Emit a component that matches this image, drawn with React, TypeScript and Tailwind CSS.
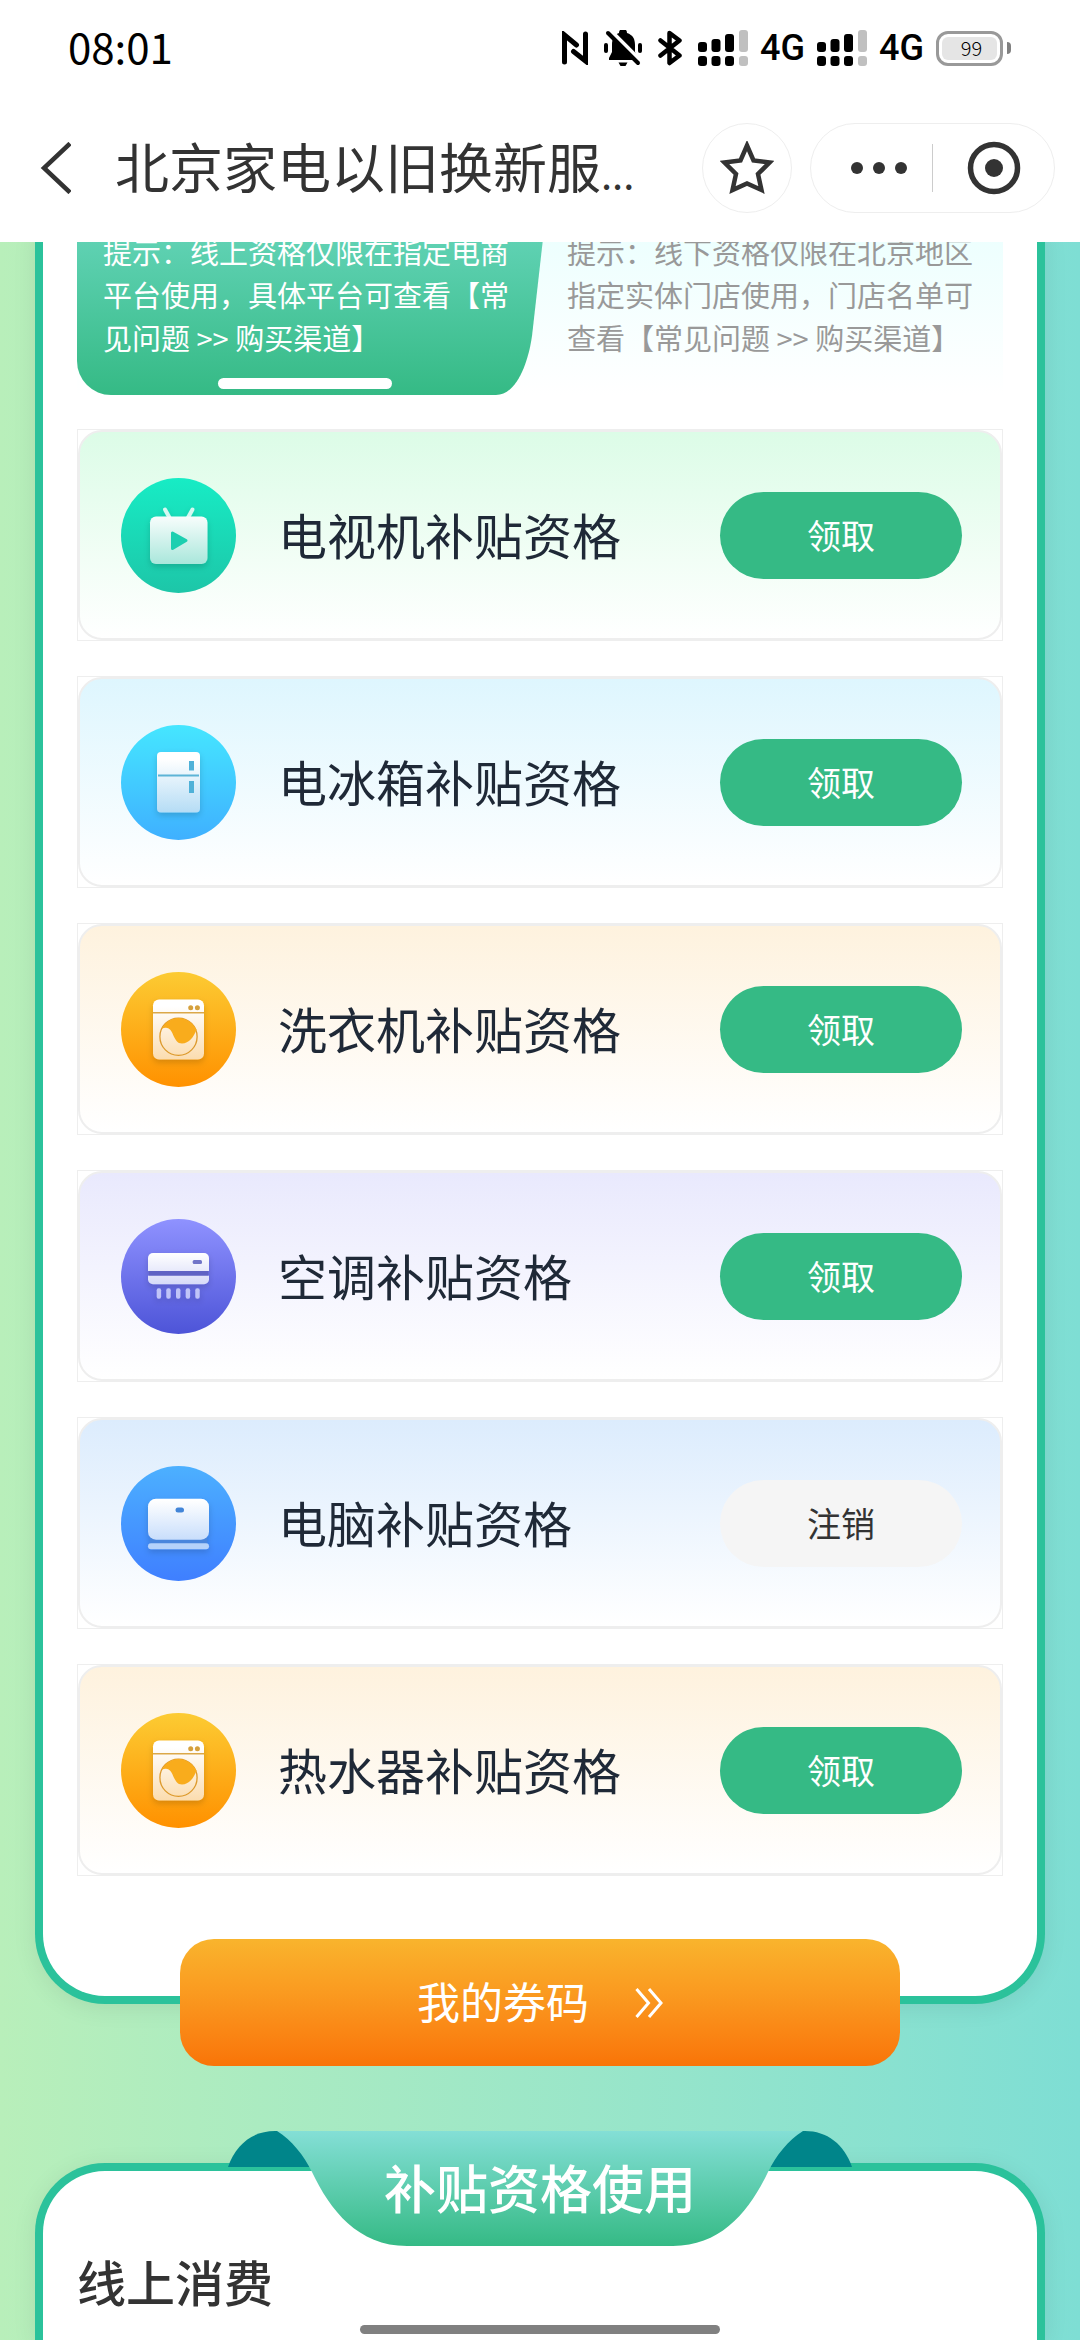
import type { ReactNode } from "react";

type Appliance = {
  name: string;
  card: string;
  icon: ReactNode;
  claimed?: boolean;
};

type BadgeProps = {
  id: string;
  from: string;
  to: string;
  plateTo: string;
  children: ReactNode;
};

/* Round gradient badge, the drawing inside uses url(#<id>-plate) as its fill */
function Badge({ id, from, to, plateTo, children }: BadgeProps) {
  return (
    <svg className="size-[115px] shrink-0" viewBox="0 0 115 115" aria-hidden="true">
      <defs>
        <linearGradient id={`${id}-bg`} x1="0" y1="0" x2="0" y2="1">
          <stop offset="0" stopColor={from} />
          <stop offset="1" stopColor={to} />
        </linearGradient>
        <linearGradient id={`${id}-plate`} gradientUnits="userSpaceOnUse" x1="0" y1="34" x2="0" y2="88">
          <stop offset="0" stopColor="#ffffff" />
          <stop offset="1" stopColor={plateTo} />
        </linearGradient>
        <filter id={`${id}-shadow`} x="-30%" y="-30%" width="160%" height="160%">
          <feDropShadow dx="0" dy="3" stdDeviation="3" floodColor="#000000" floodOpacity="0.16" />
        </filter>
      </defs>
      <circle cx="57.5" cy="57.5" r="57.5" fill={`url(#${id}-bg)`} />
      <g filter={`url(#${id}-shadow)`}>{children}</g>
    </svg>
  );
}

function TvIcon() {
  return (
    <Badge id="tv" from="#17ecc5" to="#1dc6a8" plateTo="#a6e6da">
      <path d="M44 31.5l5 9M71.5 31.5l-5 9" stroke="#d6f8f1" strokeWidth="4" strokeLinecap="round" />
      <rect x="29" y="38.5" width="57.5" height="47.5" rx="6" fill="url(#tv-plate)" />
      <path d="M51.5 55v15.5L65 62.5z" fill="#1fcfb0" stroke="#1fcfb0" strokeWidth="3" strokeLinejoin="round" />
    </Badge>
  );
}

function FridgeIcon() {
  return (
    <Badge id="fridge" from="#45e6ff" to="#3fb0ff" plateTo="#b4dcf5">
      <rect x="36" y="27" width="43" height="60.5" rx="4" fill="url(#fridge-plate)" />
      <path d="M37 50.5h41" stroke="#5db4d6" strokeWidth="2" />
      <rect x="68" y="36" width="5" height="9.5" fill="#4fb1d8" />
      <rect x="68" y="56" width="5" height="12" fill="#4fb1d8" />
    </Badge>
  );
}

function WasherIcon({ id }: { id: string }) {
  return (
    <Badge id={id} from="#fccb33" to="#ff9100" plateTo="#fbdcae">
      <rect x="32" y="27.5" width="51" height="60" rx="6" fill={`url(#${id}-plate)`} />
      <path d="M32 40.7h51" stroke="#dba848" strokeWidth="1.5" />
      <circle cx="69.7" cy="35.7" r="2.5" fill="#d5a03c" />
      <circle cx="76.4" cy="35.7" r="2.5" fill="#d5a03c" />
      <circle cx="57.5" cy="64.7" r="18.6" fill="none" stroke="#dd9a2c" strokeWidth="1.3" />
      <path
        d="M41 57C44 50 50 46 57.5 46S71 50 75.5 57.5C73 65 68 71.5 61 71.5C52 71.5 53 57 46 56C44 55.5 42.5 56 41 57Z"
        fill="#f9ac1e"
      />
    </Badge>
  );
}

function AirConIcon() {
  return (
    <Badge id="aircon" from="#8f92ff" to="#4d54d8" plateTo="#b9bff3">
      <rect x="28" y="51" width="59" height="7" fill="#6163c4" />
      <path d="M27 52V39a5 5 0 0 1 5-5h51a5 5 0 0 1 5 5v13z" fill="url(#aircon-plate)" />
      <path d="M27 56.7h61v3.5a5 5 0 0 1-5 5H32a5 5 0 0 1-5-5z" fill="url(#aircon-plate)" />
      <rect x="71.7" y="41" width="9.3" height="4" rx="1.5" fill="#7174c8" />
      {[35.7, 45.3, 55, 64.7, 74.3].map((x) => (
        <rect key={x} x={x} y="69.3" width="4.4" height="10.4" rx="2" fill="#c0c4f8" />
      ))}
    </Badge>
  );
}

function ComputerIcon() {
  return (
    <Badge id="computer" from="#4cb0ff" to="#3f7fff" plateTo="#b5d2fa">
      <rect x="29" y="70" width="57" height="8" fill="#4a86dd" />
      <rect x="27" y="32.7" width="61" height="41" rx="8" fill="url(#computer-plate)" />
      <rect x="54.5" y="41.5" width="8.5" height="5" rx="2.5" fill="#4285d8" />
      <rect x="27" y="77.3" width="61" height="6" rx="3" fill="#b5d2fa" />
    </Badge>
  );
}

const appliances: Appliance[] = [
  { name: "电视机补贴资格", card: "from-[#dcfce7]", icon: <TvIcon /> },
  { name: "电冰箱补贴资格", card: "from-[#def6fe]", icon: <FridgeIcon /> },
  { name: "洗衣机补贴资格", card: "from-[#fef2de]", icon: <WasherIcon id="washer" /> },
  { name: "空调补贴资格", card: "from-[#e9e9fd]", icon: <AirConIcon /> },
  { name: "电脑补贴资格", card: "from-[#dcecfd]", icon: <ComputerIcon />, claimed: true },
  { name: "热水器补贴资格", card: "from-[#fef2de]", icon: <WasherIcon id="heater" /> },
];

function Signal() {
  return (
    <svg className="h-9 w-[50px]" viewBox="0 0 50 36" aria-hidden="true">
      <rect x="0" y="12" width="9" height="10" rx="3" />
      <rect x="13.5" y="9" width="9" height="13" rx="3" />
      <rect x="27" y="4" width="9" height="18" rx="3" />
      <rect x="41" y="0" width="9" height="22" rx="3" fill="#c0c0c0" />
      <rect x="0" y="26" width="9" height="10" rx="3" />
      <rect x="13.5" y="26" width="9" height="10" rx="3" />
      <rect x="27" y="26" width="9" height="10" rx="3" />
      <rect x="41" y="26" width="9" height="10" rx="3" fill="#c0c0c0" />
    </svg>
  );
}

function StatusBar() {
  return (
    <div className="flex h-24 items-center justify-between pl-[68px] pr-[69px] text-black">
      <span className="pb-1 text-[42px] leading-none">08:01</span>

      <div className="flex items-center gap-3">
        <div className="mr-1 flex items-center gap-4">
          <svg className="h-[34px] w-[26px]" viewBox="0 0 26 34" aria-hidden="true">
            <path
              d="M2.5 31V4L14.5 14M23.5 3v27L11.5 20.5"
              fill="none"
              stroke="black"
              strokeWidth="5"
              strokeLinecap="round"
            />
          </svg>
          <svg className="h-9 w-[38px]" viewBox="0 0 38 36" aria-hidden="true">
            <path d="M15 3a4 4 0 0 1 8 0c6 2 8 6 8 12v7l3 6v2H5v-2l3-6v-7C8 9 10 5 15 3z" />
            <path d="M14.5 32.5h9l-2 3.5h-5z" />
            <rect x="0" y="13" width="4" height="10" rx="2" />
            <rect x="34" y="13" width="4" height="10" rx="2" />
            <path d="M6 0l32 32" stroke="white" strokeWidth="4" />
            <path d="M4 3l30 30" stroke="black" strokeWidth="4" strokeLinecap="round" />
          </svg>
          <svg className="h-9 w-6" viewBox="0 0 24 36" aria-hidden="true">
            <path
              d="M2.5 10.5L21.5 25.5L11.5 33V3L21.5 10.5L2.5 25.5"
              fill="none"
              stroke="black"
              strokeWidth="4.5"
              strokeLinejoin="round"
              strokeLinecap="round"
            />
          </svg>
        </div>
        <Signal />
        <span className="font-[Roboto] text-[36px] font-medium leading-9">4G</span>
        <Signal />
        <span className="font-[Roboto] text-[36px] font-medium leading-9">4G</span>
        <div className="flex items-center gap-1">
          <div className="h-[35px] w-[67px] rounded-xl border-3 border-[#999999] p-[3px]">
            <div className="flex h-full items-center justify-center rounded-md bg-[#e5e5e5] pl-1 text-xl font-light leading-none">
              99
            </div>
          </div>
          <span className="h-3 w-1 rounded-r-full bg-[#808080]" />
        </div>
      </div>
    </div>
  );
}

function TitleBar() {
  return (
    <div className="flex h-[146px] items-start pl-[39px] pr-[25px] pt-[27px] text-[#333333]">
      <div className="flex h-[90px] flex-1 items-center gap-11">
        <button type="button" aria-label="返回">
          <svg className="h-[52px] w-8" viewBox="0 0 32 52" fill="none" aria-hidden="true">
            <path d="M31 1.5L5 26l26 24.5" stroke="#333333" strokeWidth="4.5" />
          </svg>
        </button>
        <h1 className="whitespace-nowrap pb-1 text-[54px] leading-none">
          北京家电以旧换新服<span className="text-[40px]">...</span>
        </h1>
      </div>

      <button
        type="button"
        aria-label="收藏"
        className="mr-[18px] flex size-[90px] items-center justify-center rounded-full border border-[#eeeeee]"
      >
        <svg className="size-[54px]" viewBox="0 0 54 54" fill="none" aria-hidden="true">
          <path
            d="M27 4.5L33.5 19.5L49.5 21.5L38 33L41.5 49L27 42.5L12.5 49L16 33L4.5 21.5L20.5 19.5Z"
            stroke="#333333"
            strokeWidth="4.5"
          />
        </svg>
      </button>

      <div className="flex h-[90px] w-[245px] items-center rounded-full border border-[#eeeeee]">
        <button type="button" aria-label="更多" className="flex h-full w-1/2 items-center justify-center gap-[10px] pl-[14px]">
          <span className="size-3 rounded-full bg-[#333333]" />
          <span className="size-3 rounded-full bg-[#333333]" />
          <span className="size-3 rounded-full bg-[#333333]" />
        </button>
        <span className="h-12 w-px bg-[#cccccc]" />
        <button type="button" aria-label="关闭" className="flex h-full w-1/2 items-center justify-center">
          <svg className="size-[54px]" viewBox="0 0 54 54" aria-hidden="true">
            <circle cx="27" cy="27" r="23.5" fill="none" stroke="#333333" strokeWidth="5.5" />
            <circle cx="27" cy="27" r="9" fill="#333333" />
          </svg>
        </button>
      </div>
    </div>
  );
}

function ChannelTabs() {
  return (
    <div className="flex bg-gradient-to-b from-[#ecfffe] to-white text-[29px] leading-[43px]">
      <button type="button" className="relative h-[165px] w-[468px] pl-[26px] text-left text-white">
        <svg
          className="absolute inset-0 size-full"
          viewBox="0 0 468 165"
          preserveAspectRatio="none"
          aria-hidden="true"
        >
          <defs>
            <linearGradient id="tab-bg" x1="0" y1="0" x2="0" y2="1">
              <stop offset="0" stopColor="#62d3b6" />
              <stop offset="1" stopColor="#35ba85" />
            </linearGradient>
          </defs>
          <path d="M0 0H467L455 106C451 134 439 165 419 165H34A34 34 0 0 1 0 131Z" fill="url(#tab-bg)" />
        </svg>
        <span className="relative block h-full w-[410px]">
          提示：线上资格仅限在指定电商平台使用，具体平台可查看【常见问题 &gt;&gt; 购买渠道】
        </span>
        <span className="absolute bottom-[6px] left-[141px] h-[11px] w-[174px] rounded-full bg-white" />
      </button>
      <button type="button" className="flex-1 pl-[22px] pr-6 text-left text-[#999999]">
        <span className="block h-full">
          提示：线下资格仅限在北京地区指定实体门店使用，门店名单可查看【常见问题 &gt;&gt; 购买渠道】
        </span>
      </button>
    </div>
  );
}

function ApplianceRow({ name, card, icon, claimed }: Appliance) {
  return (
    <li className="h-[212px] border border-[#eeeeee]">
      <div
        className={`flex h-full items-center rounded-3xl border-2 border-[#eeeeee] bg-gradient-to-b to-white pl-[41px] pr-[38px] ${card}`}
      >
        {icon}
        <span className="ml-[42px] flex-1 pb-1 text-[49px] leading-none text-[#1f2937]">{name}</span>
        <button
          type="button"
          className={`h-[87px] w-[242px] rounded-full pb-[2px] text-[34px] ${
            claimed ? "bg-[#f5f5f5] text-[#333333]" : "bg-[#35ba85] text-white"
          }`}
        >
          {claimed ? "注销" : "领取"}
        </button>
      </div>
    </li>
  );
}

function Ribbon({ children }: { children: ReactNode }) {
  return (
    <div className="relative flex h-[115px] w-[624px] items-center justify-center">
      <svg className="absolute inset-0 size-full" viewBox="0 0 624 115" aria-hidden="true">
        <defs>
          <linearGradient id="ribbon-bg" x1="0" y1="0" x2="0" y2="1">
            <stop offset="0" stopColor="#84dfd6" />
            <stop offset="1" stopColor="#35ba85" />
          </linearGradient>
        </defs>
        <path d="M0 36C8 13 25 0 47 0H54L90 36Z" fill="#00858a" />
        <path d="M624 36C616 13 599 0 577 0H570L534 36Z" fill="#00858a" />
        <path
          d="M49 0C64 9 76 25 84 41C102 79 130 115 179 115H445C494 115 522 79 540 41C548 25 560 9 575 0Z"
          fill="url(#ribbon-bg)"
        />
      </svg>
      <h2 className="relative pb-1 text-[52px] font-medium leading-none text-white">{children}</h2>
    </div>
  );
}

export default function App() {
  return (
    <div className="relative flex min-h-screen flex-col overflow-hidden bg-gradient-to-r from-[#b8efba] to-[#7eded4] font-['Noto_Sans_CJK_SC',sans-serif]">
      <header className="relative z-10 bg-white">
        <StatusBar />
        <TitleBar />
      </header>

      <main className="-mt-3 flex flex-1 flex-col px-[35px]">
        {/* Subsidy list */}
        <section className="rounded-b-[70px] border-8 border-t-0 border-[#2bc29b] bg-white px-[34px] pb-[120px] shadow-[0_4px_24px_rgba(0,0,0,0.08)]">
          <ChannelTabs />
          <ul className="mt-[34px] flex flex-col gap-[35px]">
            {appliances.map((item) => (
              <ApplianceRow key={item.name} {...item} />
            ))}
          </ul>
        </section>

        {/* Voucher button, sits over the bottom edge of the list */}
        <button
          type="button"
          className="relative -mt-[65px] flex h-[127px] w-[720px] items-center justify-center gap-[46px] self-center rounded-[34px] bg-gradient-to-b from-[#f9b42d] to-[#f97407] text-[43px] text-white"
        >
          <span className="pb-1">我的券码</span>
          <svg className="h-[30px] w-7" viewBox="0 0 28 30" fill="none" aria-hidden="true">
            <path d="M1.5 1l12 14l-12 14M14 1l12 14l-12 14" stroke="white" strokeWidth="3" />
          </svg>
        </button>

        {/* How to use */}
        <section className="mt-[97px] flex flex-1 flex-col rounded-t-[70px] border-8 border-b-0 border-[#2bc29b] bg-white px-[34px] shadow-[0_4px_24px_rgba(0,0,0,0.08)]">
          <div className="-mt-10 flex justify-center">
            <Ribbon>补贴资格使用</Ribbon>
          </div>
          <h3 className="mt-[10px] text-[49px] font-medium leading-none text-[#333333]">线上消费</h3>
        </section>
      </main>

      {/* Gesture bar */}
      <div className="absolute inset-x-0 bottom-[6px] flex justify-center">
        <span className="h-[9px] w-1/3 rounded-full bg-[#808080]" />
      </div>
    </div>
  );
}
